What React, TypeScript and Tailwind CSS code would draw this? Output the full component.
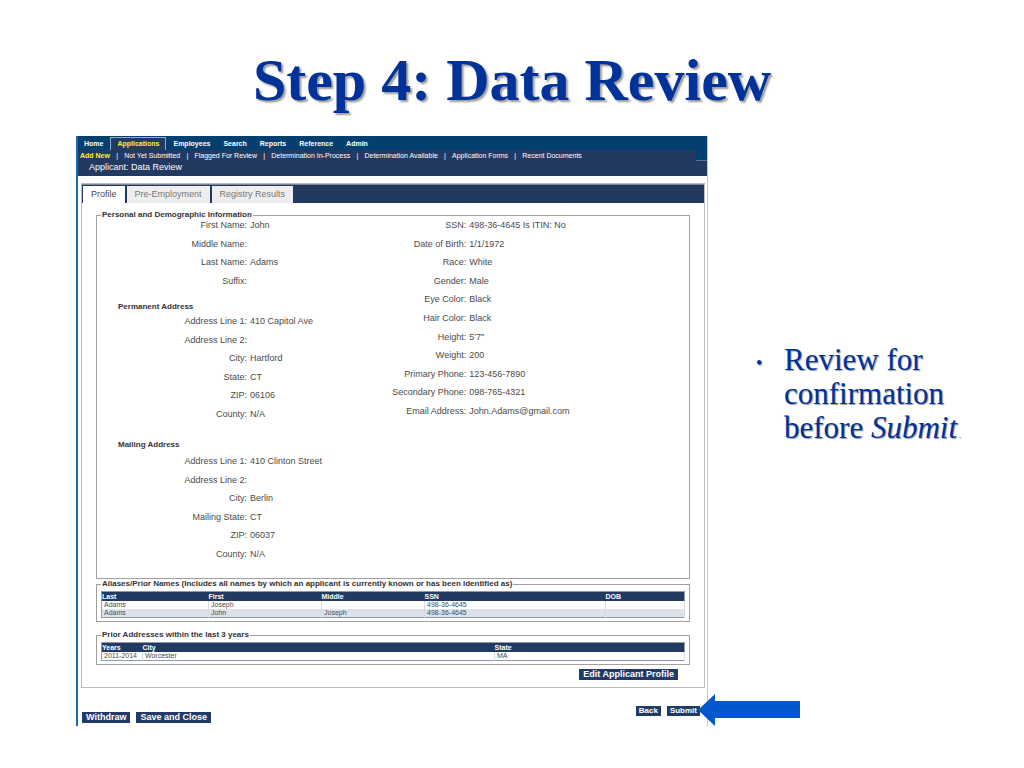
import clsx from "clsx";

type Field = [label: string, value: string];

const menu = ["Home", "Applications", "Employees", "Search", "Reports", "Reference", "Admin"];

const subMenu = [
  "Add New",
  "Not Yet Submitted",
  "Flagged For Review",
  "Determination In-Process",
  "Determination Available",
  "Application Forms",
  "Recent Documents",
];

const names: Field[] = [
  ["First Name", "John"],
  ["Middle Name", ""],
  ["Last Name", "Adams"],
  ["Suffix", ""],
];

const permanent: Field[] = [
  ["Address Line 1", "410 Capitol Ave"],
  ["Address Line 2", ""],
  ["City", "Hartford"],
  ["State", "CT"],
  ["ZIP", "06106"],
  ["County", "N/A"],
];

const mailing: Field[] = [
  ["Address Line 1", "410 Clinton Street"],
  ["Address Line 2", ""],
  ["City", "Berlin"],
  ["Mailing State", "CT"],
  ["ZIP", "06037"],
  ["County", "N/A"],
];

const demographics: Field[] = [
  ["SSN", "498-36-4645 Is ITIN: No"],
  ["Date of Birth", "1/1/1972"],
  ["Race", "White"],
  ["Gender", "Male"],
  ["Eye Color", "Black"],
  ["Hair Color", "Black"],
  ["Height", "5'7\""],
  ["Weight", "200"],
  ["Primary Phone", "123-456-7890"],
  ["Secondary Phone", "098-765-4321"],
  ["Email Address", "John.Adams@gmail.com"],
];

function FieldList({ fields, className, labelClass }: { fields: Field[]; className: string; labelClass: string }) {
  return (
    <dl className={clsx("flex flex-col justify-between text-[9px] leading-[10px]", className)}>
      {fields.map(([label, value]) => (
        <div key={label} className="flex gap-[3px] whitespace-nowrap">
          <dt className={clsx("shrink-0 text-right", labelClass)}>{label}:</dt>
          <dd>{value}</dd>
        </div>
      ))}
    </dl>
  );
}

function Group({ title, className, children }: { title: string; className: string; children: React.ReactNode }) {
  return (
    <fieldset className={clsx("min-w-0 border border-[#a0a0a0]", className)}>
      <legend className="ml-1 px-px text-[8px] leading-[10px] font-bold whitespace-nowrap text-[#333]">
        {title}
      </legend>
      {children}
    </fieldset>
  );
}

function DataTable({ columns, widths, rows }: { columns: string[]; widths: string[]; rows: string[][] }) {
  return (
    <table className="w-full table-fixed border border-[#8f9bab] text-left text-[7px] leading-[8px]">
      <thead className="bg-[#223a62] leading-[9px] text-white">
        <tr>
          {columns.map((column, i) => (
            <th key={column} className={clsx("p-0 font-bold", widths[i])}>{column}</th>
          ))}
        </tr>
      </thead>
      <tbody>
        {rows.map((row, i) => (
          <tr key={i} className="even:bg-[#dde2ea]">
            {row.map((cell, j) => (
              <td key={j} className="h-2 border-r border-[#d5dae2] p-0 pl-[2px]">{cell}</td>
            ))}
          </tr>
        ))}
      </tbody>
    </table>
  );
}

function NavyButton({ children, small }: { children: string; small?: boolean }) {
  return (
    <button
      type="button"
      className={clsx(
        "bg-[#223a66] font-bold whitespace-nowrap text-white",
        small ? "px-[3px] text-[8px] leading-[10px]" : "px-1 text-[9px] leading-[11px]"
      )}
    >
      {children}
    </button>
  );
}

export default function App() {
  return (
    <div className="min-h-screen bg-white font-['Liberation_Sans',Arial,sans-serif] text-[#4a4a4a]">
      <h1 className="pt-[46px] pb-[22px] text-center font-['Liberation_Serif',serif] text-[60px] leading-[68px] font-bold text-[#003399] [text-shadow:2px_2px_2px_#00000066]">
        Step 4: Data Review
      </h1>

      <main className="grid grid-cols-[2fr_1fr] pl-[76px]">
        {/* Application window */}
        <section className="relative border-r border-l-2 border-r-[#b4c6ea] border-l-[#1668b0]">
          <header className="bg-[#223a62] text-white">
            <nav aria-label="Main" className="flex h-[14px] items-end gap-px bg-[#03406f] text-[7px] leading-[12px] font-bold">
              {menu.map((item) => (
                <a
                  key={item}
                  href="#"
                  className={clsx(
                    "px-[6px]",
                    item === "Applications" && "border border-b-0 border-[#8fa9c8] bg-[#223a62] text-[#f5f52a]"
                  )}
                >
                  {item}
                </a>
              ))}
            </nav>
            <div className="flex">
              <nav aria-label="Applications" className="flex grow items-center justify-between pr-[114px] pl-[2px] text-[7px] leading-[11px] whitespace-nowrap">
                {subMenu.map((item, i) => (
                  <div key={item} className="contents">
                    {i > 0 && <span aria-hidden="true">|</span>}
                    <a href="#" className={clsx(i === 0 && "font-bold text-[#f5f52a]")}>{item}</a>
                  </div>
                ))}
              </nav>
              <div className="w-[11px] border-b border-[#4d75a3] bg-[#03406f]" />
            </div>
            <h2 className="pb-[3px] pl-[11px] text-[9px] leading-[12px]">Applicant: Data Review</h2>
          </header>

          {/* Tab panel */}
          <div className="mt-[7px] mr-[2px] ml-[3px] border border-[#bcbcbc]">
            <div role="tablist" className="flex h-[19px] items-end gap-[2px] border-t border-[#7f8794] bg-[#223a62] pl-px text-[9px]">
              <button type="button" role="tab" aria-selected="true" className="h-[17px] bg-white px-2">Profile</button>
              <button type="button" role="tab" aria-selected="false" className="h-[17px] bg-[#eeeeee] px-2 text-[#777]">Pre-Employment</button>
              <button type="button" role="tab" aria-selected="false" className="h-[17px] bg-[#eeeeee] px-2 text-[#777]">Registry Results</button>
            </div>

            <div className="px-[14px] pt-[7px] pb-[7px]">
              <Group title="Personal and Demographic Information" className="pb-[19px]">
                <div className="grid grid-cols-[47%_53%]">
                  <div>
                    <FieldList fields={names} className="h-[66px]" labelClass="w-[150px]" />
                    <h3 className="mt-4 pl-[21px] text-[8px] leading-[10px] font-bold text-[#333]">Permanent Address</h3>
                    <FieldList fields={permanent} className="mt-1 h-[103px]" labelClass="w-[150px]" />
                    <h3 className="mt-[21px] pl-[21px] text-[8px] leading-[10px] font-bold text-[#333]">Mailing Address</h3>
                    <FieldList fields={mailing} className="mt-[6px] h-[103px]" labelClass="w-[150px]" />
                  </div>
                  <FieldList fields={demographics} className="h-[196px]" labelClass="w-[91px]" />
                </div>
              </Group>

              <Group
                title="Aliases/Prior Names (Includes all names by which an applicant is currently known or has been identified as)"
                className="pb-[3px]"
              >
                <div className="px-1 pt-[2px]">
                  <DataTable
                    columns={["Last", "First", "Middle", "SSN", "DOB"]}
                    widths={["w-[107px]", "w-[113px]", "w-[103px]", "w-[181px]", "w-auto"]}
                    rows={[
                      ["Adams", "Joseph", "", "498-36-4645", ""],
                      ["Adams", "John", "Joseph", "498-36-4645", ""],
                    ]}
                  />
                </div>
              </Group>

              <Group title="Prior Addresses within the last 3 years" className="mt-2 pb-[3px]">
                <div className="px-1 pt-[2px]">
                  <DataTable
                    columns={["Years", "City", "State"]}
                    widths={["w-[41px]", "w-[352px]", "w-auto"]}
                    rows={[["2011-2014", "Worcester", "MA"]]}
                  />
                </div>
              </Group>

              <div className="mt-1 flex justify-end pr-3">
                <NavyButton>Edit Applicant Profile</NavyButton>
              </div>
            </div>
          </div>

          {/* Footer actions */}
          <footer className="flex items-end justify-between pt-[18px] pr-[7px] pb-[3px] pl-1">
            <div className="flex gap-[6px]">
              <NavyButton>Withdraw</NavyButton>
              <NavyButton>Save and Close</NavyButton>
            </div>
            <div className="flex gap-[6px] pb-[7px]">
              <NavyButton small>Back</NavyButton>
              <NavyButton small>Submit</NavyButton>
            </div>
          </footer>

          <svg aria-hidden="true" viewBox="0 0 102 32" className="absolute right-[-93px] bottom-0 h-8 w-[102px]">
            <path d="M0 16 17 0V7H102V24H17V32Z" fill="#0058cf" />
          </svg>
        </section>

        {/* Slide note */}
        <ul className="pt-[207px] pl-[76px]">
          <li className="relative max-w-[200px] font-['Liberation_Serif',serif] text-[31px] leading-[34px] text-[#003399] [text-shadow:1px_1px_1px_#00000066]">
            <span aria-hidden="true" className="absolute top-[3px] -left-7 text-[18px]">•</span>
            <span className="block">Review for confirmation</span>
            <span>before </span>
            <em>Submit</em>
            <span className="ml-[2px] text-[8px]">.</span>
          </li>
        </ul>
      </main>
    </div>
  );
}
